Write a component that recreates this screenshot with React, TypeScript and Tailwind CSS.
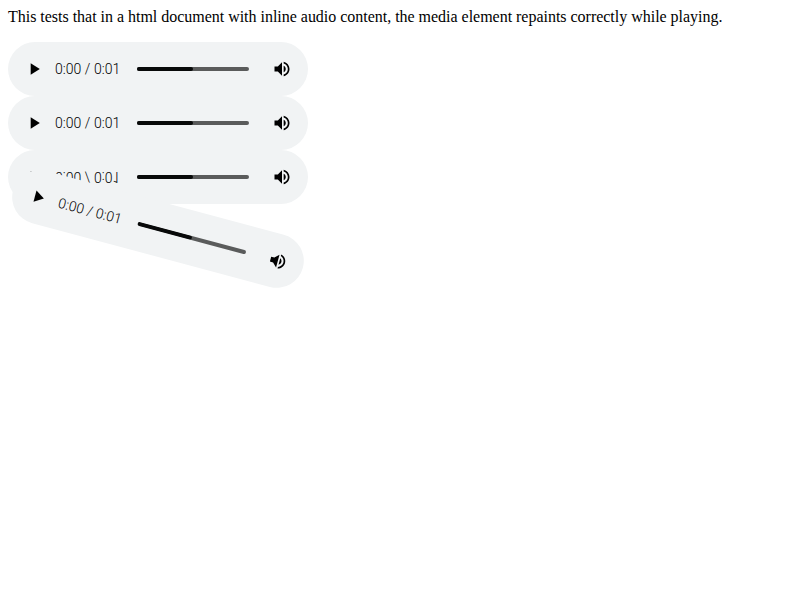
function Player({ className = "" }: { className?: string }) {
  return (
    <div
      className={`flex h-[54px] w-[300px] items-center rounded-full bg-[#f1f3f4] ${className}`}
    >
      <svg viewBox="0 0 24 24" className="ml-4 size-5 shrink-0 fill-black">
        <path d="M8 5v14l11-7z" />
      </svg>
      <span className="ml-[11px] w-[66px] shrink-0 whitespace-nowrap font-['Roboto',sans-serif] text-[14px] font-light leading-5 tracking-[0.04px] text-black">
        0:00 / 0:01
      </span>
      <div className="ml-4 flex h-1 w-[112px] shrink-0 overflow-hidden rounded-full bg-[#5a5b5b]">
        <div className="w-1/2 rounded-r-full bg-[#080909]" />
      </div>
      <svg viewBox="0 0 24 24" className="ml-[23px] size-5 shrink-0 fill-black">
        <path d="M3 9v6h4l5 5V4L7 9H3zm13.5 3c0-1.77-1.02-3.29-2.5-4.03v8.05c1.48-.73 2.5-2.25 2.5-4.02zM14 3.23v2.06c2.89.86 5 3.54 5 6.71s-2.11 5.85-5 6.71v2.06c4.01-.91 7-4.49 7-8.77s-2.99-7.86-7-8.77z" />
      </svg>
    </div>
  );
}

export default function App() {
  return (
    <main className="h-[600px] w-[800px] overflow-hidden bg-white p-2 text-black">
      <p className="mb-4 h-[18px] whitespace-nowrap font-['Liberation_Serif',serif] text-[16px] leading-[18px] tracking-[-0.02px]">
        This tests that in a html document with inline audio content, the media element repaints correctly while playing.
      </p>
      <Player />
      <Player />
      <Player className="-scale-y-100" />
      <Player className="-mt-0.5 rotate-15" />
    </main>
  );
}
